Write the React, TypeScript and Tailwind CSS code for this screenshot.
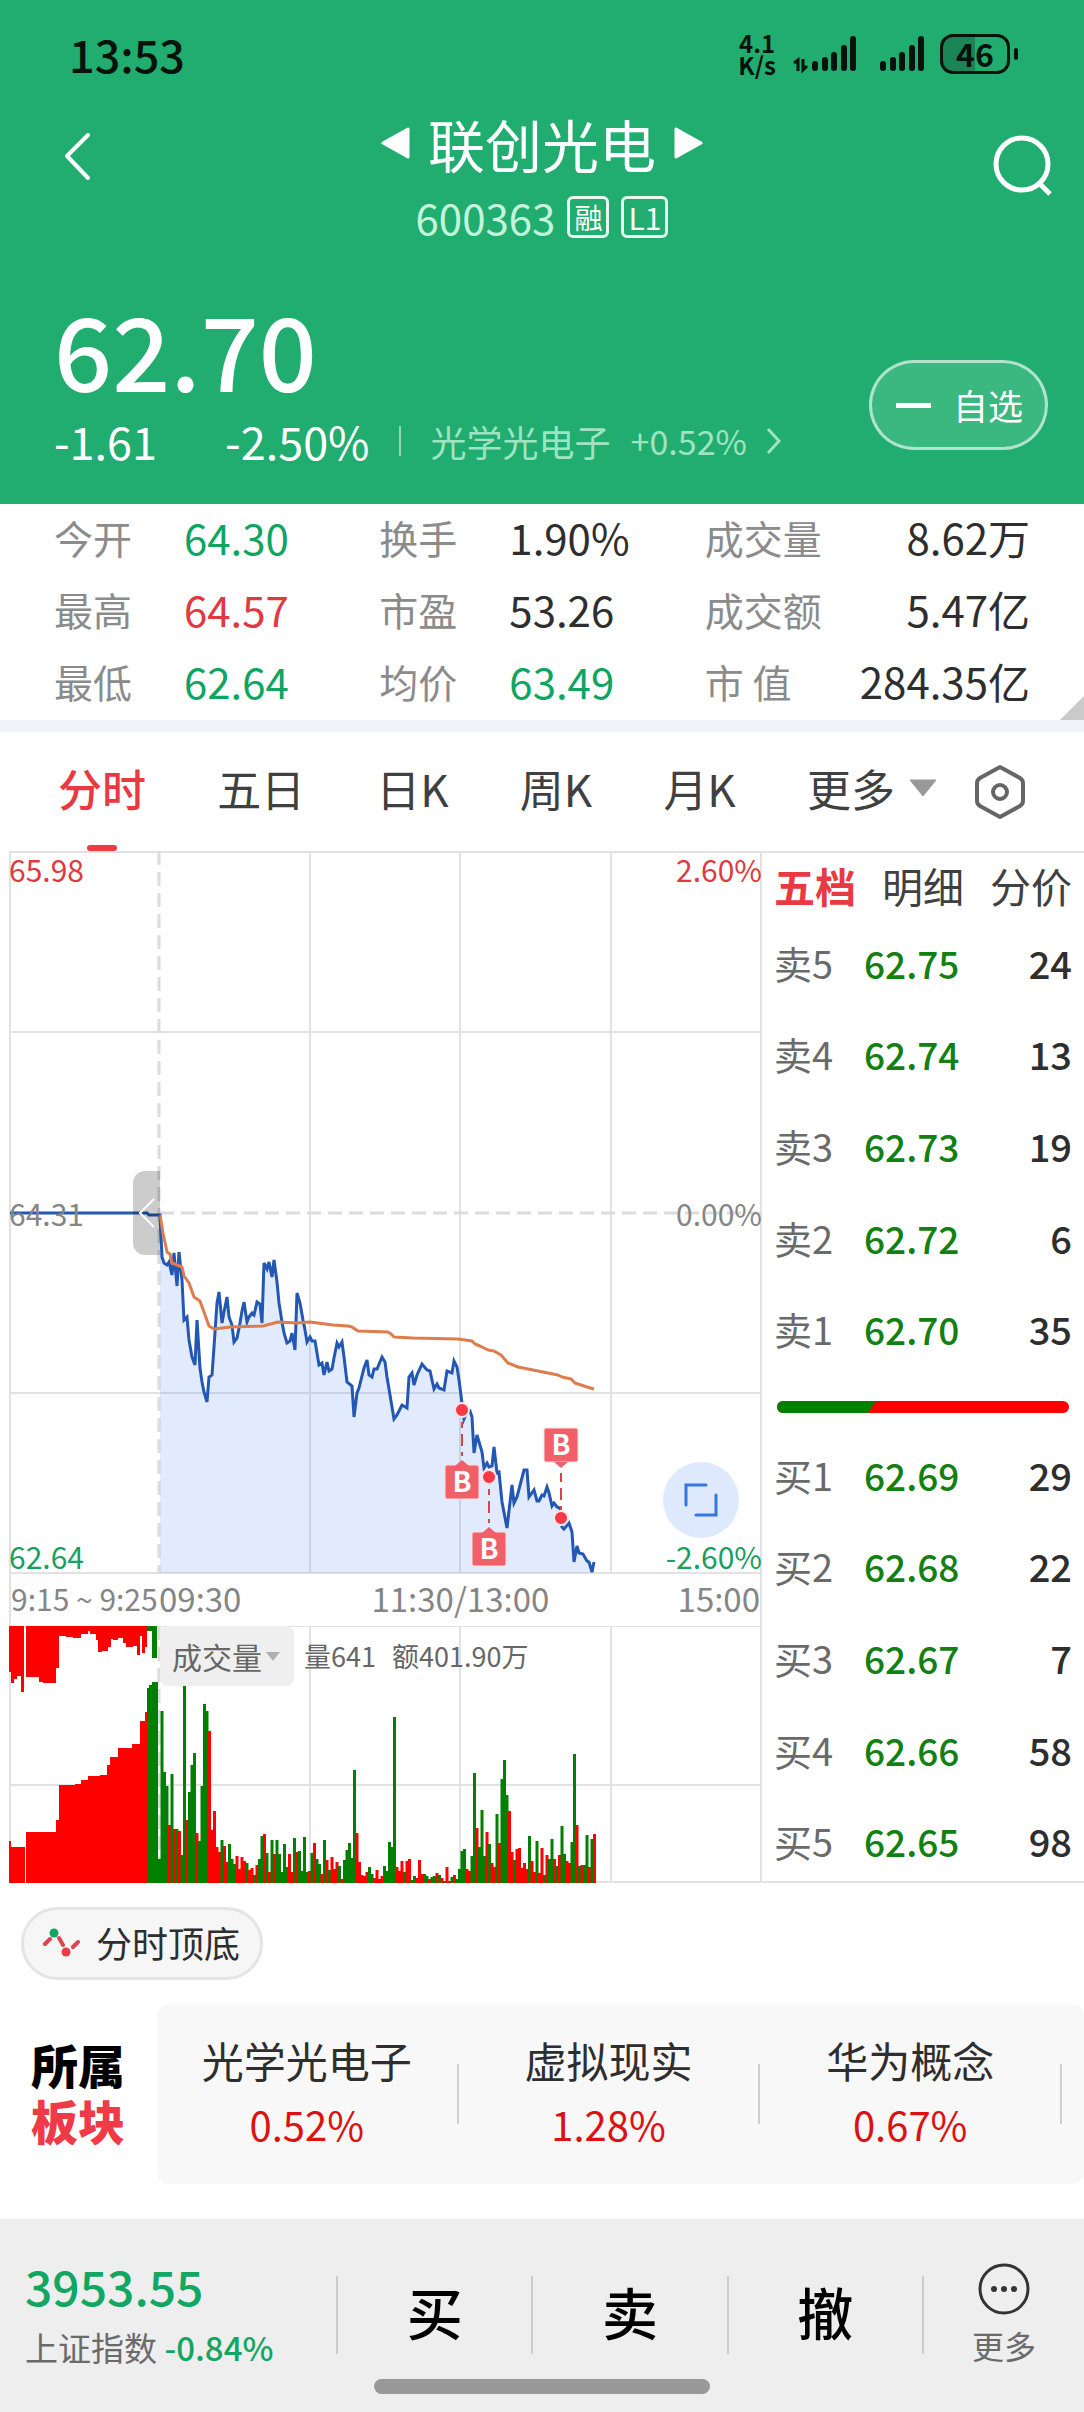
import React from 'react';

const stats = [
  { label: '今开', value: '64.30', color: 'text-[#0ea562]' },
  { label: '换手', value: '1.90%', color: 'text-[#2e2e2e]' },
  { label: '成交量', value: '8.62万', color: 'text-[#2e2e2e]' },
  { label: '最高', value: '64.57', color: 'text-[#e0393f]' },
  { label: '市盈', value: '53.26', color: 'text-[#2e2e2e]' },
  { label: '成交额', value: '5.47亿', color: 'text-[#2e2e2e]' },
  { label: '最低', value: '62.64', color: 'text-[#0ea562]' },
  { label: '均价', value: '63.49', color: 'text-[#0ea562]' },
  { label: '市 值', value: '284.35亿', color: 'text-[#2e2e2e]' },
];

const periods = ['分时', '五日', '日K', '周K', '月K'];

const asks = [
  ['卖5', '62.75', 24],
  ['卖4', '62.74', 13],
  ['卖3', '62.73', 19],
  ['卖2', '62.72', 6],
  ['卖1', '62.70', 35],
];

const bids = [
  ['买1', '62.69', 29],
  ['买2', '62.68', 22],
  ['买3', '62.67', 7],
  ['买4', '62.66', 58],
  ['买5', '62.65', 98],
];

const sectors = [
  { name: '光学光电子', change: '0.52%' },
  { name: '虚拟现实', change: '1.28%' },
  { name: '华为概念', change: '0.67%' },
];

const priceLine =
  '160,364 162,406 164,412 167,414 169,411 172,424 174,402 177,435 179,401 182,429 184,469 187,466 189,489 192,506 195,514 197,469 200,517 202,531 204,541 207,551 209,526 212,524 214,496 217,452 219,441 222,472 224,461 227,446 229,466 232,474 234,491 237,487 240,472 242,460 244,451 247,471 249,466 252,462 254,464 257,451 260,453 262,472 264,412 267,418 269,411 272,426 274,409 277,431 279,452 282,471 284,482 287,492 290,490 292,482 295,499 297,442 300,452 303,469 305,479 307,491 310,486 312,490 315,490 317,502 319,514 322,512 324,524 327,511 329,520 332,518 334,507 337,492 339,496 342,491 344,506 347,531 352,535 354,566 357,542 359,537 364,517 367,509 369,524 372,526 374,518 377,518 382,506 385,511 387,526 392,556 394,568 397,564 402,554 407,557 409,526 412,522 414,534 417,524 422,513 427,519 430,520 434,538 437,533 439,537 444,539 447,520 452,522 454,510 457,516 459,529 462,552 464,568 467,561 470,560 472,566 474,602 477,584 482,601 484,617 487,612 489,616 492,615 494,596 497,622 499,621 502,651 507,677 512,634 514,652 517,646 524,619 527,619 529,646 534,639 537,650 539,650 542,644 544,645 547,636 549,642 552,655 554,652 557,656 560,657 562,676 564,678 569,672 572,681 574,711 577,695 579,702 583,703 587,710 589,711 592,721 594,711';

const averageLine =
  '160,364 163,382 167,401 170,403 172,412 182,416 184,425 189,432 194,446 200,450 209,475 214,478 230,476 263,475 278,471 297,472 310,471 333,474 348,475 352,476 358,480 388,481 391,483 394,486 413,487 458,488 472,490 475,493 480,495 488,499 494,500 501,504 508,512 518,516 558,524 562,526 571,528 575,532 587,536 594,538';

// below: tag sits under the dot, otherwise over it
const trades = [
  { x: 462, y: 559, tag: 615, below: true },
  { x: 489, y: 626, tag: 682, below: true },
  { x: 561, y: 667, tag: 578, below: false },
];

// [from, to, height]
const auctionTop = [
  [10, 12, 46], [12, 15, 57], [15, 18, 53], [18, 22, 50], [22, 25, 66], [27, 40, 51], [40, 44, 56], [44, 57, 57],
  [57, 60, 42], [60, 67, 10], [67, 74, 11], [74, 82, 12], [82, 89, 8], [89, 91, 5], [91, 97, 8], [97, 99, 14],
  [99, 103, 26], [103, 109, 25], [109, 112, 21], [112, 114, 13], [114, 119, 14], [119, 124, 12], [124, 127, 17],
  [127, 134, 21], [134, 138, 20], [138, 141, 29], [141, 143, 10], [143, 146, 27], [146, 148, 21],
  [148, 153, 5], [153, 158, 32],
];

const auctionBottom = [
  [10, 11, 42], [11, 25, 36], [27, 57, 51], [57, 60, 63], [60, 76, 98], [76, 82, 99], [82, 89, 103], [89, 101, 107],
  [101, 108, 108], [108, 111, 118], [111, 119, 126], [119, 133, 135], [133, 141, 139], [141, 146, 162],
  [146, 148, 171], [148, 150, 195], [150, 153, 198], [153, 158, 201],
];

// one bar a minute, negative means the price fell
const volumes = [
  -24, -172, -111, -97, 58, -109, 54, -54, 52, -28, -200, 63, -91, -118, -130, 50, -42, -97, -179, -172,
  152, 53, 72, 36, 31, -43, 37, 21, -39, -24, -19, 27, 14, 26, 22, -20, 13, 15, -8, 18,
  -24, -47, 49, -30, 11, -43, 29, -43, -29, -11, -39, -16, 29, 11, -45, 31, -32, -12, -46, -11,
  12, -30, 40, -24, -19, 9, -43, 23, -13, 26, 14, 21, -17, 4, -23, -33, -40, -25, -113, 50,
  21, 8, 7, 11, -16, -9, 5, 13, 4, 7, -17, -12, -41, -36, -166, 16, 12, 22, -11, 22,
  24, -3, -7, 5, 23, 9, -9, -7, 4, -6, -7, 10, -8, 5, -2, 16, 2, -6, 8, -4,
  -14, -32, -34, 14, 12, -27, -110, 55, -36, -73, -27, 51, -39, 20, 16, -69, 40, -104, -123, -88,
  72, 31, -23, 34, 35, 15, 20, 14, -47, 22, 11, -42, 10, 35, -8, 28, -24, -44, 24, -17,
  28, -57, -29, 22, 20, -41, -129, 58, -17, 18, -18, -48, 16, -44, 49,
];

function SignalBars({ data = false }: { data?: boolean }) {
  return (
    <svg width={data ? 66 : 48} height="40" viewBox={data ? '-18 0 66 40' : '0 0 48 40'} aria-hidden="true">
      {data && (
        <g stroke="#06120c" strokeWidth="3" fill="none">
          <path d="M-16 29 L-12 26 V37" />
          <path d="M-7 25 V36 L-3 32" />
        </g>
      )}
      <g stroke="#06120c" strokeWidth="6" strokeLinecap="round">
        <path d="M5 30 V34" />
        <path d="M15 26 V34" />
        <path d="M24 21 V34" />
        <path d="M34 14 V34" />
        <path d="M43 5 V34" />
      </g>
    </svg>
  );
}

function StatusBar() {
  return (
    <div className="flex h-[104px] items-center justify-between pl-[69px] pr-[66px] pt-1 text-[#06120c]">
      <span className="text-[45px] font-medium leading-[50px]">13:53</span>
      <div className="flex items-center">
        <span className="mr-4 text-center text-[24px] font-bold leading-[22px]">
          4.1
          <br />
          K/s
        </span>
        <SignalBars data />
        <span className="w-5" />
        <SignalBars />
        <div className="ml-[14px] flex h-10 w-[70px] items-center justify-center rounded-[13px] border-3 border-[#06120c] bg-linear-to-r from-[#1b8558] from-50% to-transparent to-50% pb-[2px] text-[32px] font-bold leading-8">
          46
        </div>
        <span className="ml-1 h-3 w-1 rounded bg-[#06120c]" />
      </div>
    </div>
  );
}

function Header() {
  return (
    <header className="bg-[#20ad6f] text-white">
      <StatusBar />
      <div className="flex items-start justify-between pl-[62px] pr-[28px]">
        <button aria-label="返回" className="mt-7 w-[60px]">
          <svg width="30" height="50" viewBox="0 0 30 50" fill="none" stroke="white" strokeWidth="4" strokeLinecap="round" strokeLinejoin="round">
            <path d="M26 3 L5 24 L26 46" />
          </svg>
        </button>
        <div className="flex flex-col items-center">
          <div className="flex items-center gap-[18px]">
            <button aria-label="上一只">
              <svg width="29" height="34" viewBox="0 0 29 34" fill="white" stroke="white" strokeWidth="3" strokeLinejoin="round">
                <path d="M27 3 V31 L2 17 Z" />
              </svg>
            </button>
            <h1 className="text-[57px] leading-[78px]">联创光电</h1>
            <button aria-label="下一只">
              <svg width="29" height="34" viewBox="0 0 29 34" fill="white" stroke="white" strokeWidth="3" strokeLinejoin="round">
                <path d="M2 3 V31 L27 17 Z" />
              </svg>
            </button>
          </div>
          <div className="mt-[14px] flex items-center">
            <span className="text-[42px] leading-[42px] text-[#c4f5dc]">600363</span>
            <span className="ml-3 flex h-[42px] w-[42px] items-center justify-center rounded-md border-3 border-white/90 text-[28px] leading-7">融</span>
            <span className="ml-3 flex h-[42px] w-[47px] items-center justify-center rounded-md border-3 border-white/90 text-[30px] leading-7">L1</span>
          </div>
        </div>
        <button aria-label="搜索" className="mt-7 flex w-[94px] justify-end">
          <svg width="64" height="66" viewBox="0 0 64 66" fill="none" stroke="white" strokeWidth="5">
            <circle cx="30" cy="32" r="26" />
            <path d="M47 51 L58 62" />
          </svg>
        </button>
      </div>

      <div className="mt-[55px] flex items-end justify-between pb-[35px] pl-[54px] pr-[36px]">
        <div>
          <div className="text-[102px] font-medium leading-[110px]">62.70</div>
          <div className="mt-[10px] flex items-center text-[45px] leading-[56px]">
            <span>-1.61</span>
            <span className="ml-[68px]">-2.50%</span>
            <span className="ml-[29px] h-[30px] w-[2px] bg-white/50" />
            <a href="#sector" className="ml-[30px] flex items-center text-[36px] text-[#9fe3c2]">
              光学光电子
              <span className="ml-5 text-[34px]">+0.52%</span>
              <svg className="ml-[18px]" width="18" height="30" viewBox="0 0 18 30" fill="none" stroke="currentColor" strokeWidth="3">
                <path d="M3 3 L14 15 L3 27" />
              </svg>
            </a>
          </div>
        </div>
        <button className="mb-[19px] flex h-[90px] items-center rounded-full border-3 border-white/60 bg-white/12 pl-6 pr-[22px] text-[35px] leading-10">
          <span className="mr-[22px] h-[5px] w-[35px] bg-white" />
          自选
        </button>
      </div>
    </header>
  );
}

function Stats() {
  return (
    <section className="relative px-[54px] pb-[9px] pt-[3px]">
      <dl className="grid grid-cols-3 gap-y-3 leading-[60px]">
        {stats.map((item, idx) => (
          <div key={item.label} className={`flex ${idx % 3 === 2 ? 'justify-between' : ''}`}>
            <dt className={`text-[39px] text-[#8b8b8b] ${idx % 3 === 2 ? '' : 'w-[130px]'}`}>{item.label}</dt>
            <dd className={`text-[42px] ${item.color}`}>{item.value}</dd>
          </div>
        ))}
      </dl>
      <svg className="absolute bottom-0 right-0" width="24" height="24" viewBox="0 0 24 24" aria-hidden="true">
        <path d="M24 0 V24 H0 Z" fill="#cacaca" />
      </svg>
    </section>
  );
}

function PeriodTabs() {
  return (
    <nav className="flex h-[119px] items-center justify-between whitespace-nowrap pl-[58px] pr-[58px] text-[44px] leading-[60px] text-[#404040]">
      {periods.map((name, idx) => (
        <button key={name} className={idx === 0 ? 'relative h-full pb-2 font-medium text-[#e93a43]' : 'h-full pb-2'}>
          {name}
          {idx === 0 && <span className="absolute bottom-0 left-1/2 z-10 h-[6px] w-[30px] -translate-x-1/2 rounded-sm bg-[#ef3a43]" />}
        </button>
      ))}
      <div className="flex h-full items-center gap-[37px]">
        <button className="flex h-full items-center gap-[14px] pb-2">
          更多
          <svg width="28" height="18" viewBox="0 0 28 18" aria-hidden="true">
            <path d="M1 1 H27 L14 17 Z" fill="#999" stroke="#999" strokeLinejoin="round" />
          </svg>
        </button>
        <button aria-label="设置">
          <svg width="52" height="56" viewBox="0 0 52 56" fill="none" stroke="#666" strokeWidth="4" strokeLinejoin="round">
            <path d="M26 3 L46 14 Q49 16 49 19 V37 Q49 40 46 42 L26 53 L6 42 Q3 40 3 37 V19 Q3 16 6 14 Z" />
            <circle cx="26" cy="28" r="7" />
          </svg>
        </button>
      </div>
    </nav>
  );
}

function PriceChart() {
  return (
    <div className="relative text-[30px] leading-9">
      <svg viewBox="0 0 762 723" className="block h-auto w-full" role="img" aria-label="分时走势">
        <g stroke="#e2e2e2" strokeWidth="2">
          <path d="M10 1 H762 M10 181 H762 M10 542 H762 M10 722 H762" />
          <path d="M10 0 V723 M310 0 V723 M460 0 V723 M611 0 V723 M761 0 V723" />
        </g>
        <g stroke="#dcdcdc" strokeWidth="3" strokeDasharray="14 7">
          <path d="M159 0 V723" />
          <path d="M160 362 H761" />
        </g>
        <polygon points={`160,722 ${priceLine} 594,722`} fill="#3b74f0" fillOpacity="0.15" />
        <polyline points={`10,362 147,362 149,364 ${priceLine}`} fill="none" stroke="#2257b3" strokeWidth="3" />
        <polyline points={averageLine} fill="none" stroke="#de7c4d" strokeWidth="3" strokeLinejoin="round" />
        {trades.map((t) => {
          const tip = t.below
            ? `M${t.x - 7} ${t.tag} L${t.x} ${t.tag - 6} L${t.x + 7} ${t.tag} Z`
            : `M${t.x - 7} ${t.tag + 33} L${t.x} ${t.tag + 39} L${t.x + 7} ${t.tag + 33} Z`;
          return (
            <g key={t.x}>
              <path
                d={t.below ? `M${t.x} ${t.y + 12} V${t.tag - 10}` : `M${t.x} ${t.y - 6} V${t.tag + 44}`}
                stroke="#d8444e"
                strokeWidth="2"
                strokeDasharray="12 6"
                strokeDashoffset="6"
              />
              <circle cx={t.x} cy={t.y} r="7" fill="#f33a46" stroke="#fde3e5" strokeWidth="2" />
              <rect x={t.x - 17} y={t.tag - 1} width="34" height="34" rx="2" fill="#f15f69" stroke="#fbdfe2" strokeWidth="1" />
              <path d={tip} fill="#f15f69" />
              <text x={t.x} y={t.tag + 26} textAnchor="middle" fontSize="28" fontWeight="700" fill="white">
                B
              </text>
            </g>
          );
        })}
      </svg>
      <span className="absolute left-[9px] top-0 text-[#e0393f]">65.98</span>
      <span className="absolute right-0 top-0 text-[#e0393f]">2.60%</span>
      <span className="absolute left-[9px] top-1/2 -translate-y-1/2 text-[#858585]">64.31</span>
      <span className="absolute right-0 top-1/2 -translate-y-1/2 text-[#858585]">0.00%</span>
      <span className="absolute bottom-0 left-[9px] text-[#1a9f5e]">62.64</span>
      <span className="absolute bottom-0 right-0 text-[#1a9f5e]">-2.60%</span>
      <button aria-label="收起" className="absolute left-[133px] top-1/2 flex h-[84px] w-[27px] -translate-y-1/2 items-center justify-center rounded-l-xl bg-black/20">
        <svg width="18" height="32" viewBox="0 0 18 32" fill="none" stroke="white" strokeWidth="2">
          <path d="M16 2 L2 16 L16 30" />
        </svg>
      </button>
      <button aria-label="全屏" className="absolute bottom-[36px] right-[23px] flex h-[76px] w-[76px] items-center justify-center rounded-full bg-[#dfe9fd]">
        <svg width="34" height="34" viewBox="0 0 34 34" fill="none" stroke="#3478dc" strokeWidth="3" strokeLinecap="round">
          <path d="M2 22 V2 H22" />
          <path d="M32 12 V32 H12" />
        </svg>
      </button>
    </div>
  );
}

function TimeAxis() {
  return (
    <div className="relative ml-[9px] flex h-[52px] items-center justify-between border-x-2 border-[#e2e2e2] pb-1 text-[33px] leading-10 text-[#858585]">
      <div className="flex items-center">
        <span className="w-[148px] whitespace-nowrap text-[30px]">9:15 ~ 9:25</span>
        <span>09:30</span>
      </div>
      <span className="absolute left-[60%] -translate-x-1/2">11:30/13:00</span>
      <span>15:00</span>
    </div>
  );
}

function VolumeChart() {
  const base = 257;
  const fill = (up: boolean) => (up ? '#ff0000' : '#008000');
  return (
    <div className="relative">
      <svg viewBox="0 0 762 257" className="block h-auto w-full" role="img" aria-label="成交量">
        <g stroke="#e2e2e2" strokeWidth="2">
          <path d="M10 0 H762 M10 159 H762 M10 256 H762" />
          <path d="M10 0 V257 M310 0 V257 M460 0 V257 M611 0 V257 M761 0 V257" />
        </g>
        <path d="M159 0 V257" stroke="#dcdcdc" strokeWidth="3" strokeDasharray="14 7" />
        {auctionTop.map(([from, to, h]) => (
          <rect key={from} x={from - 1} y="0" width={to - from} height={h} fill={fill(from < 148)} shapeRendering="crispEdges" />
        ))}
        {auctionBottom.map(([from, to, h]) => (
          <rect key={from} x={from - 1} y={base - h} width={to - from + 1} height={h} fill={fill(from < 148)} shapeRendering="crispEdges" />
        ))}
        {volumes.map((v, i) => (
          <rect key={i} x={158 + i * 2.5} y={base - Math.abs(v)} width="3" height={Math.abs(v)} fill={fill(v > 0)} />
        ))}
      </svg>
      <div className="absolute left-[160px] top-0 flex items-center text-[27px] leading-[60px] text-[#666]">
        <div className="relative">
          <select aria-label="指标" className="block h-[60px] w-[134px] appearance-none rounded-lg bg-[#efefef] pl-3 text-[30px] text-[#666]">
            <option>成交量</option>
          </select>
          <svg className="pointer-events-none absolute right-[14px] top-[26px]" width="14" height="9" viewBox="0 0 14 9">
            <path d="M0 0 H14 L7 9 Z" fill="#b0b0b0" />
          </svg>
        </div>
        <span className="ml-[10px]">量641</span>
        <span className="ml-[16px]">额401.90万</span>
      </div>
    </div>
  );
}

function QuoteTable({ rows, label }: { rows: (string | number)[][]; label: string }) {
  return (
    <table aria-label={label} className="h-[458px] w-full text-[38px] leading-[50px]">
      <tbody>
        {rows.map(([level, price, qty]) => (
          <tr key={level}>
            <th className="w-[90px] p-0 text-left font-normal text-[#6a6a6a]">{level}</th>
            <td className="p-0 text-[37px] font-medium text-[#128012]">{price}</td>
            <td className="p-0 text-right font-medium text-[#2e2e2e]">{qty}</td>
          </tr>
        ))}
      </tbody>
    </table>
  );
}

function OrderBook() {
  return (
    <aside className="h-[1032px] w-[322px] shrink-0 border-y-2 border-[#e2e2e2] pl-3 pr-3">
      <div className="flex h-[64px] items-center justify-between text-[41px] leading-[60px] text-[#404040]">
        <button className="font-bold text-[#e93a43]">五档</button>
        <button>明细</button>
        <button>分价</button>
      </div>
      <QuoteTable rows={asks} label="卖盘" />
      <div className="mx-[3px] mb-4 mt-[26px] flex h-3 overflow-hidden rounded-full bg-[#ff0000]">
        <svg className="h-3 w-[100px]" viewBox="0 0 100 12" preserveAspectRatio="none" aria-hidden="true">
          <path d="M0 0 H99 L91 12 H0 Z" fill="#008000" />
        </svg>
      </div>
      <QuoteTable rows={bids} label="买盘" />
    </aside>
  );
}

function Sectors() {
  return (
    <section id="sector" className="mt-6 flex items-center">
      <h2 className="w-[157px] pb-1 pl-[31px] text-[47px] font-black leading-[56px] text-black">
        所属
        <br />
        <span className="text-[#ee3b47]">板块</span>
      </h2>
      <div className="flex h-[180px] flex-1 items-center rounded-xl bg-[#f8f8f8] pr-[22px]">
        {sectors.map((s) => (
          <a key={s.name} href="#sector" className="flex flex-1 items-center">
            <span className="flex flex-1 flex-col items-center pb-1">
              <span className="text-[42px] leading-[64px] text-[#2e2e2e]">{s.name}</span>
              <span className="text-[40px] leading-[64px] text-[#dd1111]">{s.change}</span>
            </span>
            <span className="h-[60px] w-[2px] bg-[#d0d0d0]" />
          </a>
        ))}
      </div>
    </section>
  );
}

function BottomBar() {
  return (
    <footer className="mt-[35px] bg-[#eeeeee] pb-[18px]">
      <div className="flex h-[160px] items-center pt-8">
        <a href="#index" className="w-[336px] whitespace-nowrap pl-[25px]">
          <div className="text-[48px] font-medium leading-[64px] text-[#12a663]">3953.55</div>
          <div className="text-[33px] leading-[60px] text-[#6a6a6a]">
            上证指数 <span className="font-medium text-[#12a663]">-0.84%</span>
          </div>
        </a>
        {['买', '卖', '撤'].map((name) => (
          <button key={name} className="h-[78px] flex-1 border-l-2 border-[#cccccc] pb-2 text-[56px] font-medium leading-[68px] text-black">
            {name}
          </button>
        ))}
        <button className="flex h-[78px] w-[162px] flex-col items-center justify-center border-l-2 border-[#cccccc] text-[32px] leading-[44px] text-[#6a6a6a]">
          <svg width="52" height="52" viewBox="0 0 52 52" fill="none" stroke="#333" strokeWidth="3" className="shrink-0">
            <circle cx="26" cy="26" r="24" />
            <g fill="#333" stroke="none">
              <circle cx="16" cy="26" r="3" />
              <circle cx="26" cy="26" r="3" />
              <circle cx="36" cy="26" r="3" />
            </g>
          </svg>
          <span className="mt-2">更多</span>
        </button>
      </div>
      <div className="mx-auto h-[15px] w-[336px] rounded-full bg-[#999999]" />
    </footer>
  );
}

export default function App() {
  return (
    <div className="bg-white font-['Noto_Sans_CJK_SC','Noto_Sans',sans-serif]">
      <Header />
      <Stats />
      <div className="h-3 bg-[#f3f4f9]" />
      <PeriodTabs />
      <div className="flex">
        <div className="min-w-0 flex-1">
          <PriceChart />
          <TimeAxis />
          <VolumeChart />
        </div>
        <OrderBook />
      </div>
      <button className="ml-[21px] mt-6 flex h-[73px] items-center rounded-full border-3 border-[#e4e4e4] bg-[#f6f6f6] pb-[3px] pl-[18px] pr-5 text-[36px] leading-10 text-[#2e2e2e]">
        <svg className="mr-[16px]" width="38" height="32" viewBox="0 0 38 32" fill="none" stroke="#db4650" strokeWidth="4" strokeLinecap="round" aria-hidden="true">
          <path d="M3 18 L8 13 M17 12 L21 19 M31 21 L36 16" />
          <circle cx="12" cy="7" r="4.5" fill="#12a663" stroke="none" />
          <circle cx="24" cy="26" r="4.5" fill="#ee3b47" stroke="none" />
        </svg>
        分时顶底
      </button>
      <Sectors />
      <BottomBar />
    </div>
  );
}
